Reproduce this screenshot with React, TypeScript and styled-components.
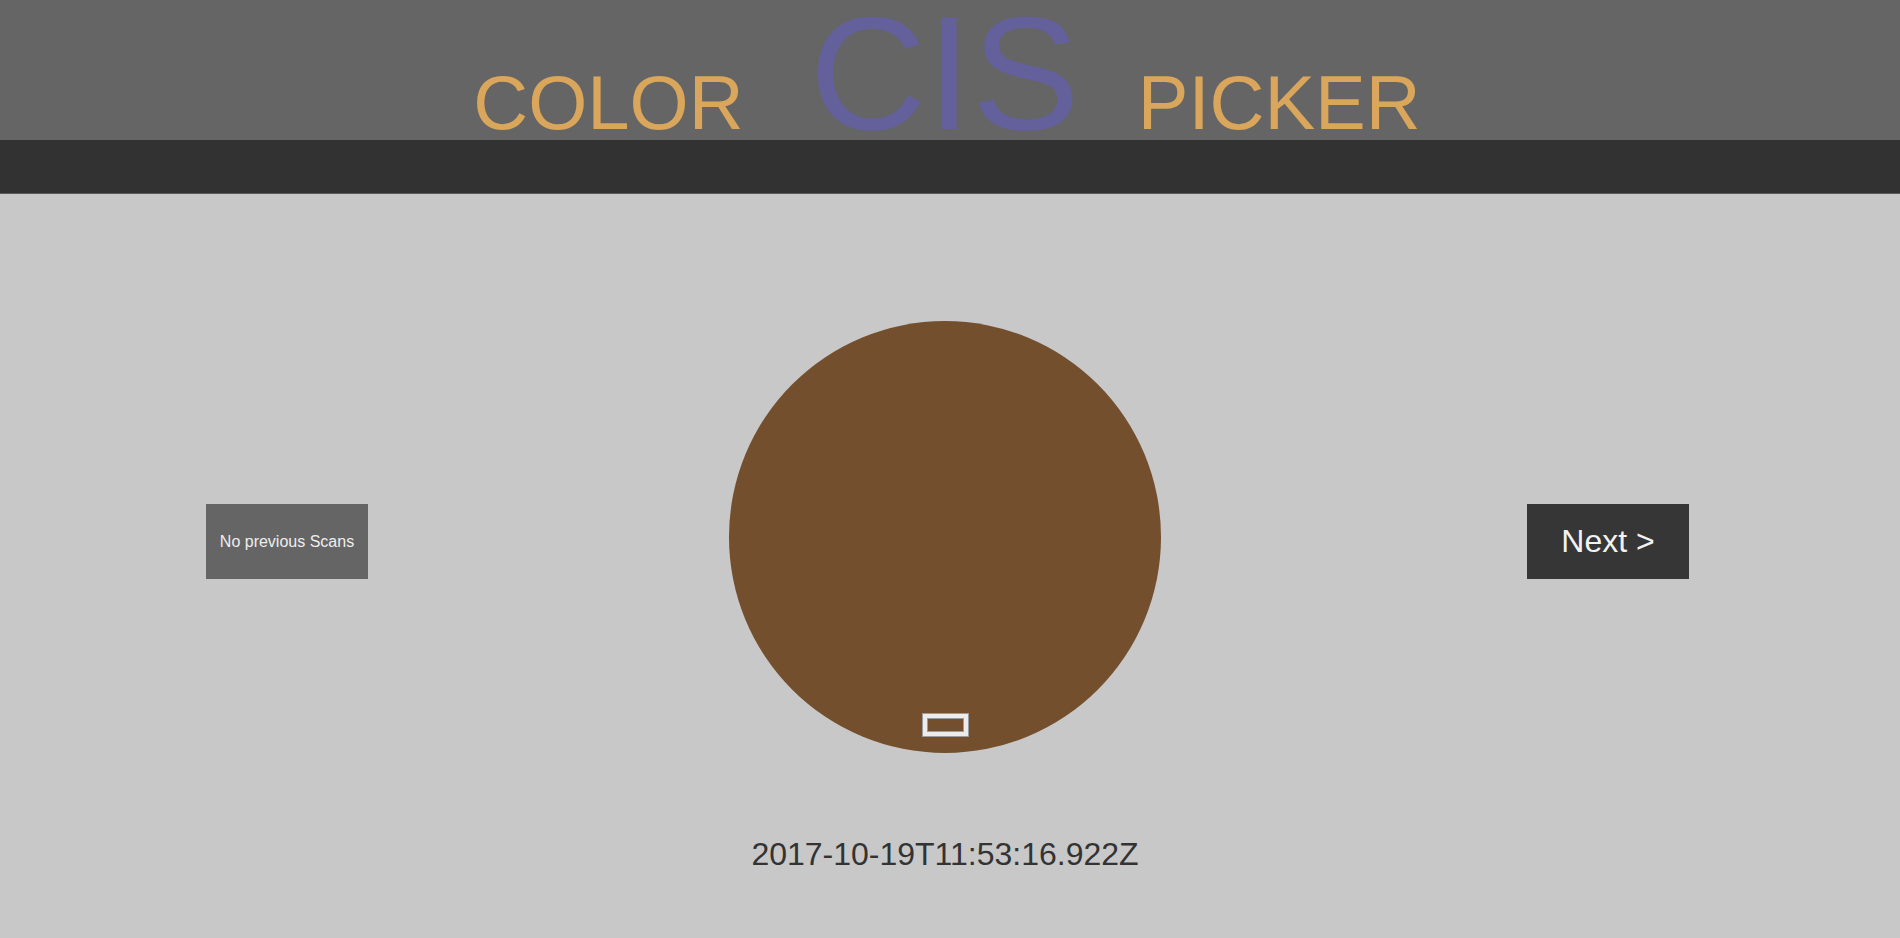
import React from "react"
import styled, { createGlobalStyle } from "styled-components"

const Colors = {
  header: "#656565",
  bar: "#323232",
  page: "#c8c8c8",
  gold: "#d9a65b",
  purple: "#63609c",
  swatch: "#734f2e",
  text: "#333333",
}

const GlobalStyle = createGlobalStyle`
  html, body {
    margin: 0;
    padding: 0;
    background: ${Colors.page};
    font-family: "Liberation Sans", Arial, sans-serif;
  }
`

interface Scan {
  color: string
  date: string
}

const scan: Scan = {
  color: Colors.swatch,
  date: "2017-10-19T11:53:16.922Z",
}

export default function App() {
  return (
    <>
      <GlobalStyle />
      <S.Header>
        <S.Word>COLOR</S.Word>
        <S.Brand>CIS</S.Brand>
        <S.Word>PICKER</S.Word>
      </S.Header>
      <S.Bar />
      <S.Main>
        <S.NavButton variant="prev">No previous Scans</S.NavButton>
        <S.Center>
          <S.Swatch style={{ backgroundColor: scan.color }}>
            <S.Marker />
          </S.Swatch>
          <S.Date>{scan.date}</S.Date>
        </S.Center>
        <S.NavButton variant="next">Next &gt;</S.NavButton>
      </S.Main>
    </>
  )
}

const S = {
  Header: styled.header`
    height: 140px;
    box-sizing: border-box;
    padding: 4px 6px 0 0;
    background: ${Colors.header};
    display: flex;
    justify-content: center;
    align-items: baseline;
  `,
  Word: styled.span`
    font-size: 76px;
    line-height: 0.9;
    color: ${Colors.gold};
  `,
  Brand: styled.span`
    font-size: 162px;
    line-height: 0.85;
    color: ${Colors.purple};
    margin: 0 58px 0 66px;
  `,
  Bar: styled.div`
    height: 53px;
    background: ${Colors.bar};
    border-bottom: 1px solid #5a5a5a;
  `,
  Main: styled.main`
    display: flex;
    align-items: flex-start;
    padding: 127px 0 0 206px;
  `,
  NavButton: styled.button<{ variant: "prev" | "next" }>`
    width: 162px;
    height: 75px;
    margin-top: 183px;
    border: 0;
    padding: 0;
    font-family: inherit;
    cursor: pointer;
    background: ${(p) => (p.variant === "next" ? "#363636" : "#656565")};
    color: ${(p) => (p.variant === "next" ? "#f2f2f2" : "#eeeeee")};
    font-size: ${(p) => (p.variant === "next" ? "32px" : "16px")};
    margin-left: ${(p) => (p.variant === "next" ? "366px" : "0")};
  `,
  Center: styled.div`
    margin-left: 361px;
    display: flex;
    flex-direction: column;
    align-items: center;
  `,
  Swatch: styled.div`
    width: 432px;
    height: 432px;
    border-radius: 50%;
    box-sizing: border-box;
    padding-bottom: 16px;
    display: flex;
    justify-content: center;
    align-items: flex-end;
  `,
  Marker: styled.div`
    width: 47px;
    height: 24px;
    box-sizing: border-box;
    border: 1px solid #9c9c9c;
    box-shadow: inset 0 0 0 4px #ececec, inset 0 0 0 5px #9c9c9c;
  `,
  Date: styled.div`
    margin-top: 83px;
    font-size: 32px;
    color: ${Colors.text};
    white-space: nowrap;
  `,
}
